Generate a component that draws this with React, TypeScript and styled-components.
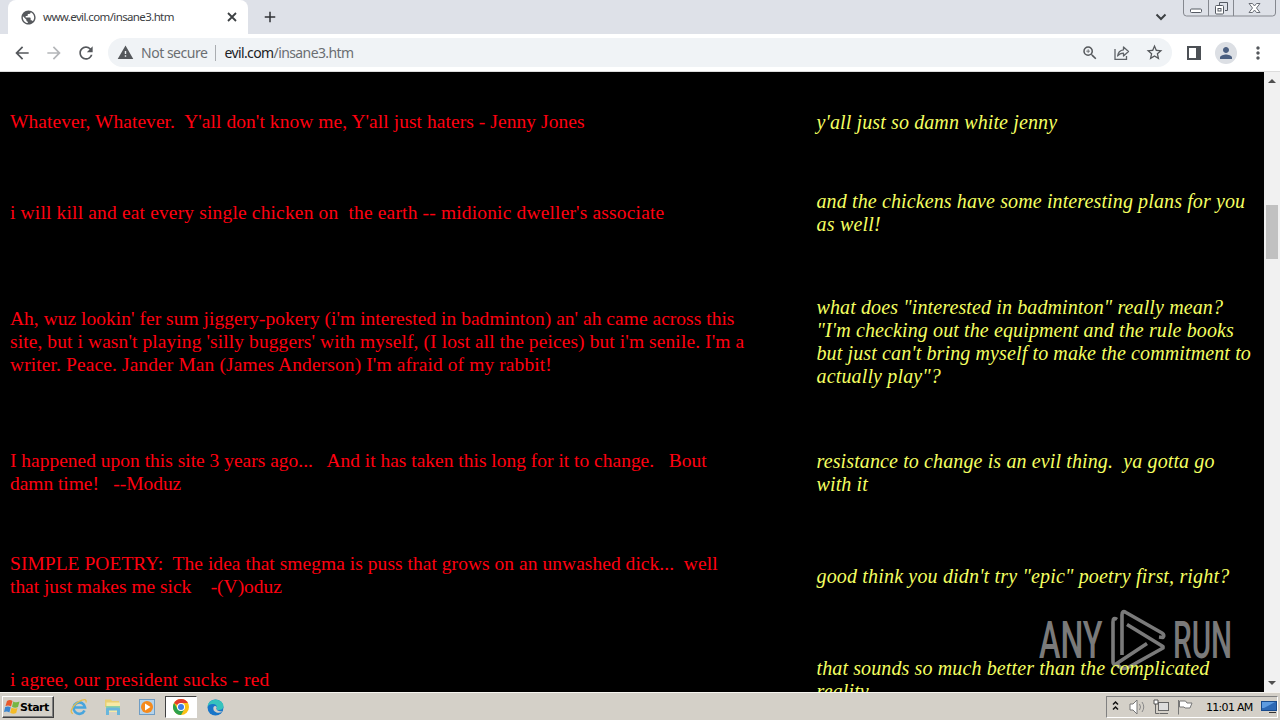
import React from "react";
import styled, { createGlobalStyle } from "styled-components";
import { MdArrowBack, MdArrowForward, MdRefresh, MdWarning, MdZoomIn, MdStarBorder, MdPerson, MdMoreVert, MdAdd, MdPublic } from "react-icons/md";

interface Line {
  text: string;
  spacing?: number;
}

interface Quote {
  height: number;
  left: Line[];
  right: Line[];
}

const quotes: Quote[] = [
  {
    height: 100,
    left: [{ text: "Whatever, Whatever.  Y'all don't know me, Y'all just haters - Jenny Jones", spacing: 0.055 }],
    right: [{ text: "y'all just so damn white jenny" }],
  },
  {
    height: 82,
    left: [{ text: "i will kill and eat every single chicken on  the earth -- midionic dweller's associate", spacing: 0.157 }],
    right: [{ text: "and the chickens have some interesting plans for you" }, { text: "as well!", spacing: 0.2 }],
  },
  {
    height: 176,
    left: [
      { text: "Ah, wuz lookin' fer sum jiggery-pokery (i'm interested in badminton) an' ah came across this", spacing: 0.02 },
      { text: "site, but i wasn't playing 'silly buggers' with myself, (I lost all the peices) but i'm senile. I'm a", spacing: 0.087 },
      { text: "writer. Peace. Jander Man (James Anderson) I'm afraid of my rabbit!", spacing: 0.1 },
    ],
    right: [
      { text: "what does \"interested in badminton\" really mean?" },
      { text: "\"I'm checking out the equipment and the rule books" },
      { text: "but just can't bring myself to make the commitment to" },
      { text: "actually play\"?", spacing: 0.15 },
    ],
  },
  {
    height: 86,
    left: [
      { text: "I happened upon this site 3 years ago...   And it has taken this long for it to change.   Bout", spacing: -0.01 },
      { text: "damn time!   --Moduz", spacing: -0.05 },
    ],
    right: [{ text: "resistance to change is an evil thing.  ya gotta go" }, { text: "with it" }],
  },
  {
    height: 120,
    left: [
      { text: "SIMPLE POETRY:  The idea that smegma is puss that grows on an unwashed dick...  well", spacing: 0.035 },
      { text: "that just makes me sick    -(V)oduz", spacing: -0.03 },
    ],
    right: [{ text: "good think you didn't try \"epic\" poetry first, right?", spacing: 0.17 }],
  },
  {
    height: 88,
    left: [{ text: "i agree, our president sucks - red", spacing: 0.16 }],
    right: [{ text: "that sounds so much better than the complicated" }, { text: "reality" }],
  },
];

const App: React.FC = () => {
  return (
    <Screen>
      <GlobalStyle />
      <TabStrip>
        <Tab>
          <MdPublic size={17} color="#55585c" />
          <TabTitle>www.evil.com/insane3.htm</TabTitle>
          <CloseIcon />
        </Tab>
        <NewTab>
          <MdAdd size={18} />
        </NewTab>
        <WindowArea>
          <svg width="12" height="8" viewBox="0 0 12 8" fill="none" stroke="#3c4043" strokeWidth="2">
            <path d="M1.5 1.5 6 6l4.5-4.5" />
          </svg>
          <Controls />
        </WindowArea>
      </TabStrip>

      <Toolbar>
        <NavButtons>
          <MdArrowBack size={20} />
          <MdArrowForward size={20} color="#b4b6b9" />
          <MdRefresh size={20} />
        </NavButtons>
        <AddressBar>
          <MdWarning size={17} />
          <Security>Not secure</Security>
          <Divider />
          <Url>
            <b>evil.com</b>/insane3.htm
          </Url>
          <AddressActions>
            <MdZoomIn size={18} />
            <ShareIcon />
            <MdStarBorder size={19} />
          </AddressActions>
        </AddressBar>
        <SidePanel />
        <Avatar>
          <MdPerson size={18} />
        </Avatar>
        <MdMoreVert size={20} />
      </Toolbar>

      <Viewport>
        <Watermark>
          <Brand $scale={0.62}>ANY</Brand>
          <PlayMark />
          <Brand $scale={0.57}>RUN</Brand>
        </Watermark>
        <Page>
          {quotes.map((quote) => (
            <Row key={quote.left[0].text} $height={quote.height}>
              <Visitor>
                {quote.left.map((line) => (
                  <TextLine key={line.text} $spacing={line.spacing}>{line.text}</TextLine>
                ))}
              </Visitor>
              <Reply>
                {quote.right.map((line) => (
                  <TextLine key={line.text} $spacing={line.spacing}>{line.text}</TextLine>
                ))}
              </Reply>
            </Row>
          ))}
        </Page>
        <Scrollbar>
          <Arrow viewBox="0 0 8 4"><path d="M0 4 4 0l4 4z" /></Arrow>
          <Thumb />
          <Arrow viewBox="0 0 8 4"><path d="M0 0l4 4 4-4z" /></Arrow>
        </Scrollbar>
      </Viewport>

      <Taskbar>
        <StartButton>
          <WindowsFlag />
          Start
        </StartButton>
        <QuickLaunch>
          <Slot><ExplorerIcon /></Slot>
          <Slot><FolderIcon /></Slot>
          <Slot><PlayerIcon /></Slot>
          <Slot $active><ChromeIcon /></Slot>
          <Slot><EdgeIcon /></Slot>
        </QuickLaunch>
        <Tray>
          <TrayIcons />
          <Clock>11:01 AM</Clock>
          <DesktopIcon />
        </Tray>
      </Taskbar>
    </Screen>
  );
};

export default App;

// Icons
const CloseIcon = () => (
  <svg width="14" height="14" viewBox="0 0 14 14" stroke="#3c4043" strokeWidth="1.800">
    <path d="M3 3l8 8M11 3l-8 8" />
  </svg>
);

const Controls = () => (
  <svg width="98" height="18" viewBox="0 0 98 18" fill="none">
    <path d="M1.500 0v13q0 3 3 3h86q3 0 3-3V0M26.500 0v16M51.500 0v16" stroke="#85888f" />
    <rect x="8.500" y="9" width="11" height="3.500" rx="1" fill="#fff" stroke="#555a63" />
    <path d="M37.500 5V2.500h8v8H43" stroke="#555a63" />
    <rect x="33.500" y="5.500" width="8" height="8.500" rx="1" fill="#fff" stroke="#555a63" />
    <rect x="36" y="8.500" width="3" height="2.500" stroke="#555a63" />
    <path d="M67 3.500h3.500l2 2.500 2-2.500H78L74.500 8l3.500 4.500h-3.500l-2-2.500-2 2.500H67L70.500 8z" fill="#fff" stroke="#6a6e76" />
  </svg>
);

const ShareIcon = () => (
  <svg width="16" height="16" viewBox="0 0 16 16" fill="none" stroke="#5f6368" strokeWidth="1.300">
    <path d="M1 4v10.300h11.500V11" />
    <path d="M9.500 2v2.800C5.800 5.200 4 7.500 3.600 11 5 9 7 8.200 9.500 8.200V11L14.500 6.500z" strokeLinejoin="round" />
  </svg>
);

const SidePanel = () => (
  <svg width="14" height="14" viewBox="0 0 14 14">
    <rect x="1" y="1" width="12" height="12" fill="none" stroke="#4c5055" strokeWidth="2" />
    <rect x="9" y="1" width="4" height="12" fill="#4c5055" />
  </svg>
);

const PlayMark = () => (
  <svg width="56" height="62" viewBox="0 0 56 62" fill="none" stroke="#7a7a7a" strokeWidth="3.600" strokeLinejoin="round">
    <path d="M7 10.500Q3 7.500 3 13V53q0 3.500 3 2L37 34.500" />
    <path d="M12 46V6q0-5 4-2.500L52 24q3 2 1 4.500l-4-.5" />
    <path d="M17 15.500 53 37.500v1.500L19 58q-7 3.500-12-2.500" />
  </svg>
);

const WindowsFlag = () => (
  <svg width="16" height="16" viewBox="0 0 16 16">
    <path d="M3 2q3-2 5.500 0L7 7.500Q4.500 5.700 1.500 7z" fill="#e8592b" />
    <path d="M9.300 2.400Q12 4 15.500 2.600L14 8q-3 1.400-6-.2z" fill="#76b643" />
    <path d="M1.200 8q3-1.300 5.500.3L5.400 13.500Q3 11.800 0 13z" fill="#3b86d0" />
    <path d="M7.500 8.700q3 1.500 6 .2L12.200 14q-3 1.400-6-.2z" fill="#f4bb27" />
  </svg>
);

const ExplorerIcon = () => (
  <svg width="18" height="18" viewBox="0 0 18 18" fill="none">
    <path d="M14.500 12.500A5.700 5.700 0 1 1 15 9.500H5" stroke="#48a5dd" strokeWidth="2.700" />
    <path d="M3 15.500C-2 15 4 5 12 2.200q5-1.700 4 2.300" stroke="#e5bd4d" strokeWidth="1.300" />
  </svg>
);

const FolderIcon = () => (
  <svg width="18" height="18" viewBox="0 0 18 18">
    <path d="M1 1.500h6L8 3h7v6H1z" fill="#e8cf74" />
    <path d="M2.500 4.500H16V14H2.500z" fill="#f6e9a6" />
    <path d="M2 8h14v3H2z" fill="#8ed1a4" />
    <path d="M2 17v-6q0-1.500 2-1.500h10q2 0 2 1.500v6h-3v-4.500H5V17z" fill="#68b6dc" />
  </svg>
);

const PlayerIcon = () => (
  <svg width="18" height="18" viewBox="0 0 18 18">
    <rect x="1.500" y="1.500" width="15" height="15" fill="#b5d3ea" stroke="#6f9dc4" />
    <circle cx="9" cy="9" r="6" fill="#f58a1c" />
    <path d="M7 5.500 12.500 9 7 12.500z" fill="#fff" />
  </svg>
);

const ChromeIcon = () => (
  <svg width="16" height="16" viewBox="0 0 16 16">
    <circle cx="8" cy="8" r="8" fill="#fbc116" />
    <path d="M8 8 1.070 4A8 8 0 0 1 14.930 4H8z" fill="#e33b2e" />
    <path d="M1.070 4A8 8 0 0 0 8 16l3.460-6L8 8 4.540 10z" fill="#2da14c" />
    <circle cx="8" cy="8" r="4" fill="#fff" />
    <circle cx="8" cy="8" r="3" fill="#3d7ee8" />
  </svg>
);

const EdgeIcon = () => (
  <svg width="17" height="17" viewBox="0 0 17 17">
    <circle cx="8.500" cy="8.500" r="8" fill="#1976c9" />
    <path d="M.5 8Q1 1 8.500.5q7.500.5 8 7-.5 3.500-5 3.500-2.500 0-1.500-2Q10 5 6 5 1.500 5 .5 8z" fill="#36c3bd" />
    <path d="M6.500 8q-1 4 3 5.500 3 1 6-1-3 0-5-1-2-1.500-.8-3.500Q8 6 6.500 8z" fill="#d4d0c8" />
  </svg>
);

const TrayIcons = () => (
  <svg width="86" height="20" viewBox="0 0 86 20" fill="none">
    <path d="M6 7.500 8.500 5 11 7.500M6 12.500 8.500 10 11 12.500" stroke="#111" strokeWidth="1.500" />
    <path d="M23 7h3l4-4v14l-4-4h-3z" fill="#fff" stroke="#777" />
    <path d="M32.500 7q2 3 0 6M35 5q3.500 5 0 10" stroke="#888" />
    <rect x="51.500" y="5.500" width="10" height="8" fill="#ddd" stroke="#666" />
    <path d="M53 16.500h8M48.500 7v9.500h4" stroke="#666" />
    <path d="M47 3h4v4h-4z" fill="#fff" stroke="#555" />
    <path d="M71.500 3v14.500" stroke="#777" />
    <path d="M72.500 4h6l1.500 2h5l-2 5h-5l-1-1h-4.500z" fill="#fff" stroke="#777" />
  </svg>
);

const DesktopIcon = () => (
  <svg width="16" height="14" viewBox="0 0 16 14">
    <rect x=".5" y="1.500" width="15" height="9" fill="#2c68b4" stroke="#174a8c" />
    <path d="M1 2h13L3 8H1z" fill="#5d9be0" />
    <path d="M8 12.500h7" stroke="#333" />
  </svg>
);

// Styled Components
const GlobalStyle = createGlobalStyle`
  body {
    margin: 0;
    overflow: hidden;
  }

  svg {
    flex: none;
  }
`;

const Screen = styled.div`
  width: 1280px;
  height: 720px;
  display: flex;
  flex-direction: column;
  overflow: hidden;
  font-family: "DejaVu Sans", sans-serif;
`;

const TabStrip = styled.div`
  height: 34px;
  display: flex;
  background: #dee1e8;
  padding-left: 8px;
`;

const Tab = styled.div`
  width: 240px;
  box-sizing: border-box;
  display: flex;
  align-items: center;
  padding: 0 9px 0 12px;
  background: #fff;
  border-radius: 8px 8px 0 0;
`;

const TabTitle = styled.span`
  flex: 1;
  margin-left: 6px;
  padding-bottom: 1px;
  font: 11.5px "Noto Sans", sans-serif;
  letter-spacing: -0.62px;
  color: #3c4043;
  white-space: nowrap;
`;

const NewTab = styled.div`
  display: flex;
  align-items: center;
  margin-left: 13px;
  color: #303236;
`;

const WindowArea = styled.div`
  margin-left: auto;
  display: flex;
  gap: 15px;

  & > :first-child {
    margin-top: 13px;
  }
`;

const Toolbar = styled.div`
  height: 37px;
  box-sizing: content-box;
  border-bottom: 1px solid #dcdcdc;
  display: flex;
  align-items: center;
  padding: 0 12px;
  background: #fff;
  color: #55585c;
`;

const NavButtons = styled.div`
  display: flex;
  gap: 12px;
  width: 96px;
`;

const AddressBar = styled.div`
  flex: 1;
  height: 29px;
  display: flex;
  align-items: center;
  padding: 0 8px 0 9px;
  margin-right: 15px;
  border-radius: 15px;
  background: #f0f3f6;
`;

const Security = styled.span`
  margin-left: 7px;
  font: 14px "Noto Sans", sans-serif;
  letter-spacing: -0.48px;
  color: #6b6e72;
`;

const Divider = styled.i`
  width: 1px;
  height: 16px;
  margin: 0 8px;
  background: #aaadb1;
`;

const Url = styled.span`
  font: 14px "Noto Sans", sans-serif;
  letter-spacing: -0.6px;
  color: #6b6e72;

  b {
    font-weight: 400;
    color: #202124;
  }
`;

const AddressActions = styled.div`
  margin-left: auto;
  display: flex;
  align-items: center;
  gap: 15px;
`;

const Avatar = styled.div`
  width: 22px;
  height: 22px;
  margin: 0 11px 0 14px;
  display: flex;
  align-items: center;
  justify-content: center;
  border-radius: 50%;
  background: #dcdfe4;
  color: #4b5f80;
`;

const Viewport = styled.div`
  height: 620px;
  display: flex;
  position: relative;
  background: #000;
  overflow: hidden;
`;

const Page = styled.div`
  flex: 1;
  position: relative;
  font: 20px/23px "Liberation Serif", serif;
`;

const Row = styled.div<{ $height: number }>`
  height: ${({ $height }) => $height}px;
  display: grid;
  grid-template-columns: 806px 1fr;
  align-items: center;
  padding-left: 10px;
`;

const Visitor = styled.div`
  padding-bottom: 2px;
  color: #ff0010;
  font-size: 19.5px;
`;

const Reply = styled.div`
  color: #f4ff60;
  font-style: italic;
  padding-left: 0.5px;
`;

const TextLine = styled.div<{ $spacing?: number }>`
  width: max-content;
  white-space: pre;
  letter-spacing: ${({ $spacing }) => $spacing ?? 0.12}px;
`;

const Scrollbar = styled.div`
  width: 16px;
  display: flex;
  flex-direction: column;
  align-items: center;
  box-sizing: border-box;
  padding: 7px 0;
  background: #f1f1f1;
`;

const Arrow = styled.svg`
  width: 8px;
  height: 4px;
  fill: #505050;
`;

const Thumb = styled.div`
  width: 12px;
  height: 54px;
  margin: 122px 0 auto;
  background: #c1c1c1;
`;

// Brand overlay in the corner of the page
const Watermark = styled.div`
  position: absolute;
  left: 1039px;
  top: 537px;
  height: 62px;
  display: flex;
  align-items: center;
  gap: 7.5px;
  color: #7a7a7a;
`;

const Brand = styled.span<{ $scale: number }>`
  width: 63px;
  padding-top: 2px;
  font: 500 52px/42px "Roboto", sans-serif;
  transform: scaleX(${({ $scale }) => $scale});
  transform-origin: left;
`;

const Taskbar = styled.div`
  height: 28px;
  box-sizing: border-box;
  border-top: 1px solid #f5f3ee;
  display: flex;
  align-items: center;
  padding: 1px 2px 0;
  background: #d4d0c8;
`;

const StartButton = styled.div`
  width: 52px;
  height: 22px;
  box-sizing: border-box;
  display: flex;
  align-items: center;
  padding-left: 1px;
  border: 1px solid;
  border-color: #fff #404040 #404040 #fff;
  box-shadow: inset -1px -1px #808080;
  font: bold 11px "DejaVu Sans", sans-serif;
  letter-spacing: -0.5px;
`;

const QuickLaunch = styled.div`
  display: flex;
  margin-left: 9px;
  gap: 2px;
`;

const Slot = styled.div<{ $active?: boolean }>`
  width: 32px;
  height: 22px;
  box-sizing: border-box;
  display: flex;
  align-items: center;
  justify-content: center;
  border: 1px solid;
  border-color: ${({ $active }) => ($active ? "#404040 #fff #fff #404040" : "transparent")};
  background: ${({ $active }) => ($active ? "#fff" : "none")};
`;

const Tray = styled.div`
  margin-left: auto;
  width: 172px;
  height: 22px;
  box-sizing: border-box;
  display: flex;
  align-items: center;
  border: 1px solid;
  border-color: #808080 #fff #fff #808080;
`;

const Clock = styled.span`
  flex: 1;
  margin-left: 13px;
  font: 11px "DejaVu Sans", sans-serif;
  letter-spacing: -0.7px;
  white-space: nowrap;
`;
